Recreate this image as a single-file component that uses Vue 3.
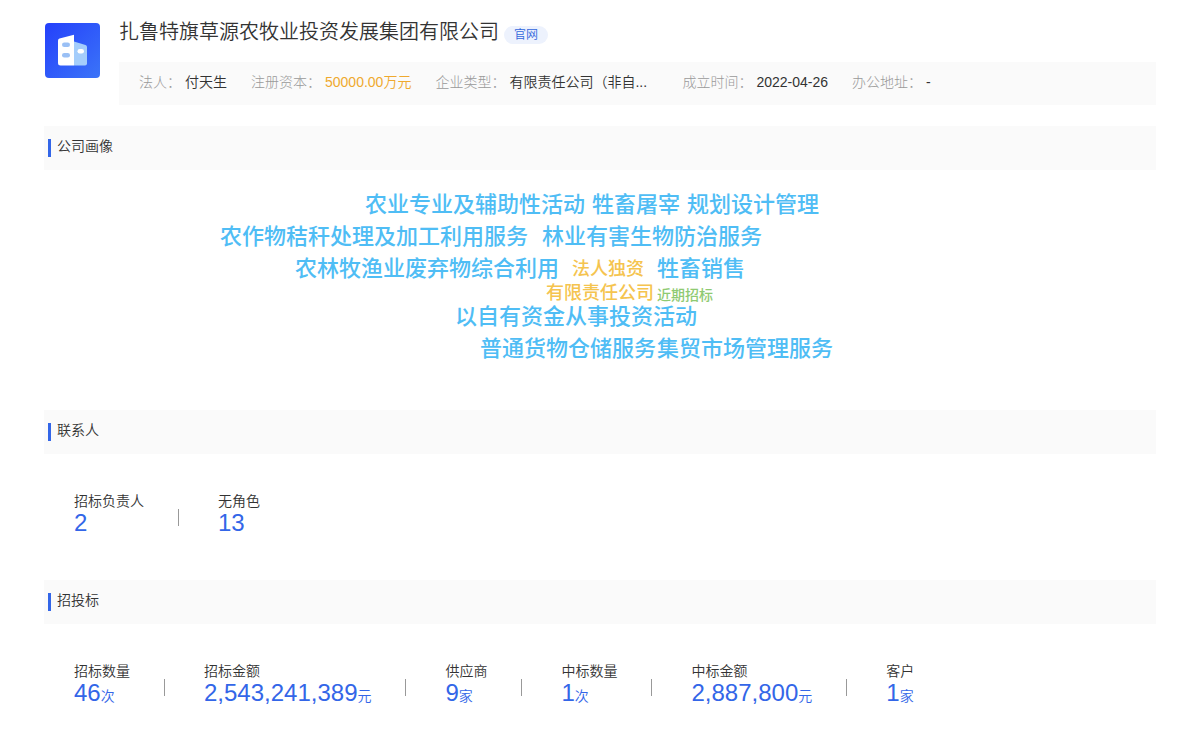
<script setup>
const facts = [
  { label: '法人：', value: '付天生' },
  { label: '注册资本：', value: '50000.00万元', kind: 'money' },
  { label: '企业类型：', value: '有限责任公司（非自...', kind: 'clip' },
  { label: '成立时间：', value: '2022-04-26' },
  { label: '办公地址：', value: '-' },
]

// x is measured from the centre line of the cloud, y from its top edge
const words = [
  { text: '农业专业及辅助性活动', x: -235, y: 19, size: 'large' },
  { text: '牲畜屠宰', x: -8, y: 19, size: 'large' },
  { text: '规划设计管理', x: 87, y: 19, size: 'large' },
  { text: '农作物秸秆处理及加工利用服务', x: -380, y: 51, size: 'large' },
  { text: '林业有害生物防治服务', x: -58, y: 51, size: 'large' },
  { text: '农林牧渔业废弃物综合利用', x: -305, y: 83, size: 'large' },
  { text: '法人独资', x: -28, y: 87, size: 'medium' },
  { text: '牲畜销售', x: 57, y: 83, size: 'large' },
  { text: '有限责任公司', x: -54, y: 111, size: 'medium' },
  { text: '近期招标', x: 57, y: 116, size: 'small' },
  { text: '以自有资金从事投资活动', x: -145, y: 131, size: 'large' },
  { text: '普通货物仓储服务', x: -120, y: 163, size: 'large' },
  { text: '集贸市场管理服务', x: 57, y: 163, size: 'large' },
]

const groups = [
  {
    title: '联系人',
    stats: [
      { label: '招标负责人', value: '2' },
      { label: '无角色', value: '13' },
    ],
  },
  {
    title: '招投标',
    stats: [
      { label: '招标数量', value: '46', unit: '次' },
      { label: '招标金额', value: '2,543,241,389', unit: '元' },
      { label: '供应商', value: '9', unit: '家' },
      { label: '中标数量', value: '1', unit: '次' },
      { label: '中标金额', value: '2,887,800', unit: '元' },
      { label: '客户', value: '1', unit: '家' },
    ],
  },
]
</script>

<template>
  <main class="page" lang="zh-CN">
    <header class="company">
      <svg class="logo" viewBox="0 0 55 55" aria-hidden="true">
        <defs>
          <linearGradient id="logo-bg" x1="0" y1="0" x2="1" y2="1">
            <stop offset="0" stop-color="#2440fb" />
            <stop offset="1" stop-color="#3b74f8" />
          </linearGradient>
        </defs>
        <rect width="55" height="55" rx="4" fill="url(#logo-bg)" />
        <path d="M29 18.5 40.5 22Q42 22.6 42 24V40.500Q42 42.500 40 42.500H29Z" fill="#a4cdfb" />
        <path d="M14.500 15.500 29 11.700V42.500H15.500Q13 42.500 13 40V17.500Q13 16 14.500 15.500Z" fill="#fff" />
        <rect x="17" y="19.500" width="8" height="4.500" rx="2.250" fill="#9ac0f5" />
        <rect x="17" y="30" width="8" height="4.500" rx="2.250" fill="#9ac0f5" />
        <rect x="32.500" y="26" width="6.500" height="4.500" rx="2.250" fill="#fff" />
      </svg>
      <div class="summary">
        <div class="heading">
          <h1>扎鲁特旗草源农牧业投资发展集团有限公司</h1>
          <a class="site" href="#">官网</a>
        </div>
        <dl class="facts">
          <div v-for="fact in facts" :key="fact.label" class="fact">
            <dt>{{ fact.label }}</dt>
            <dd :class="fact.kind">{{ fact.value }}</dd>
          </div>
        </dl>
      </div>
    </header>

    <section>
      <h2>公司画像</h2>
      <div class="cloud">
        <span
          v-for="word in words"
          :key="word.text"
          class="word"
          :class="word.size"
          :style="{ left: `calc(50% + ${word.x}px)`, top: `${word.y}px` }"
        >{{ word.text }}</span>
      </div>
    </section>

    <section v-for="group in groups" :key="group.title">
      <h2>{{ group.title }}</h2>
      <dl class="stats">
        <div v-for="stat in group.stats" :key="stat.label" class="stat">
          <div>
            <dt>{{ stat.label }}</dt>
            <dd>{{ stat.value }}<small v-if="stat.unit">{{ stat.unit }}</small></dd>
          </div>
        </div>
      </dl>
    </section>
  </main>
</template>

<style>
body {
  margin: 0;
  background: #fff;
}
</style>

<style scoped>
.page {
  padding: 16px 44px 0;
  font-family: "Liberation Sans", "Noto Sans CJK SC", sans-serif;
  font-size: 14px;
  font-weight: 350;
  line-height: 20px;
  color: #333;
}
h1, h2, dl, dd {
  margin: 0;
  font-weight: 350;
}
.company {
  display: flex;
  gap: 19px;
  margin-bottom: 21px;
}
.logo {
  flex: none;
  width: 55px;
  height: 55px;
  margin: 7px 0 0 1px;
}
.summary {
  flex: 1;
  min-width: 0;
}
.heading {
  display: flex;
  align-items: flex-start;
  gap: 5px;
  height: 46px;
}
h1 {
  font-size: 20px;
  line-height: 32px;
}
.site {
  margin-top: 10px;
  padding: 0 10px;
  border-radius: 10px;
  background: #edf2fd;
  color: #3366dc;
  font-size: 12px;
  line-height: 18px;
  text-decoration: none;
}
.facts {
  display: flex;
  gap: 24px;
  padding: 10px 20px 13px;
  background: #fafafa;
}
.fact {
  display: flex;
  gap: 4px;
  white-space: nowrap;
}
.fact dt {
  color: #999;
  font-weight: 300;
}
.money {
  color: #efa92e;
}
.clip {
  width: 149px;
}
h2 {
  display: flex;
  align-items: flex-start;
  gap: 6px;
  padding: 10px 4px 13px;
  background: #fafafa;
  font-size: 14px;
  line-height: 20px;
}
h2::before {
  content: "";
  width: 3px;
  height: 18px;
  margin-top: 3px;
  background: #3366e8;
}
.cloud {
  position: relative;
  height: 240px;
}
.word {
  position: absolute;
  white-space: nowrap;
  font-weight: 500;
}
.large {
  font-size: 22px;
  line-height: 32px;
  color: #4fbdf5;
}
.medium {
  font-size: 18px;
  line-height: 24px;
  color: #f5c44f;
}
.small {
  font-size: 14px;
  line-height: 18px;
  color: #8fca72;
}
.stats {
  display: flex;
  padding: 37px 30px 45px;
}
.stat {
  display: flex;
  white-space: nowrap;
}
.stat + .stat::before {
  content: "";
  width: 1px;
  height: 17px;
  margin: 18px 39px 0 34px;
  background: #999;
}
.stat dd {
  font-size: 24px;
  line-height: 24px;
  color: #3366e8;
}
.stat small {
  font-size: 14px;
}
</style>
